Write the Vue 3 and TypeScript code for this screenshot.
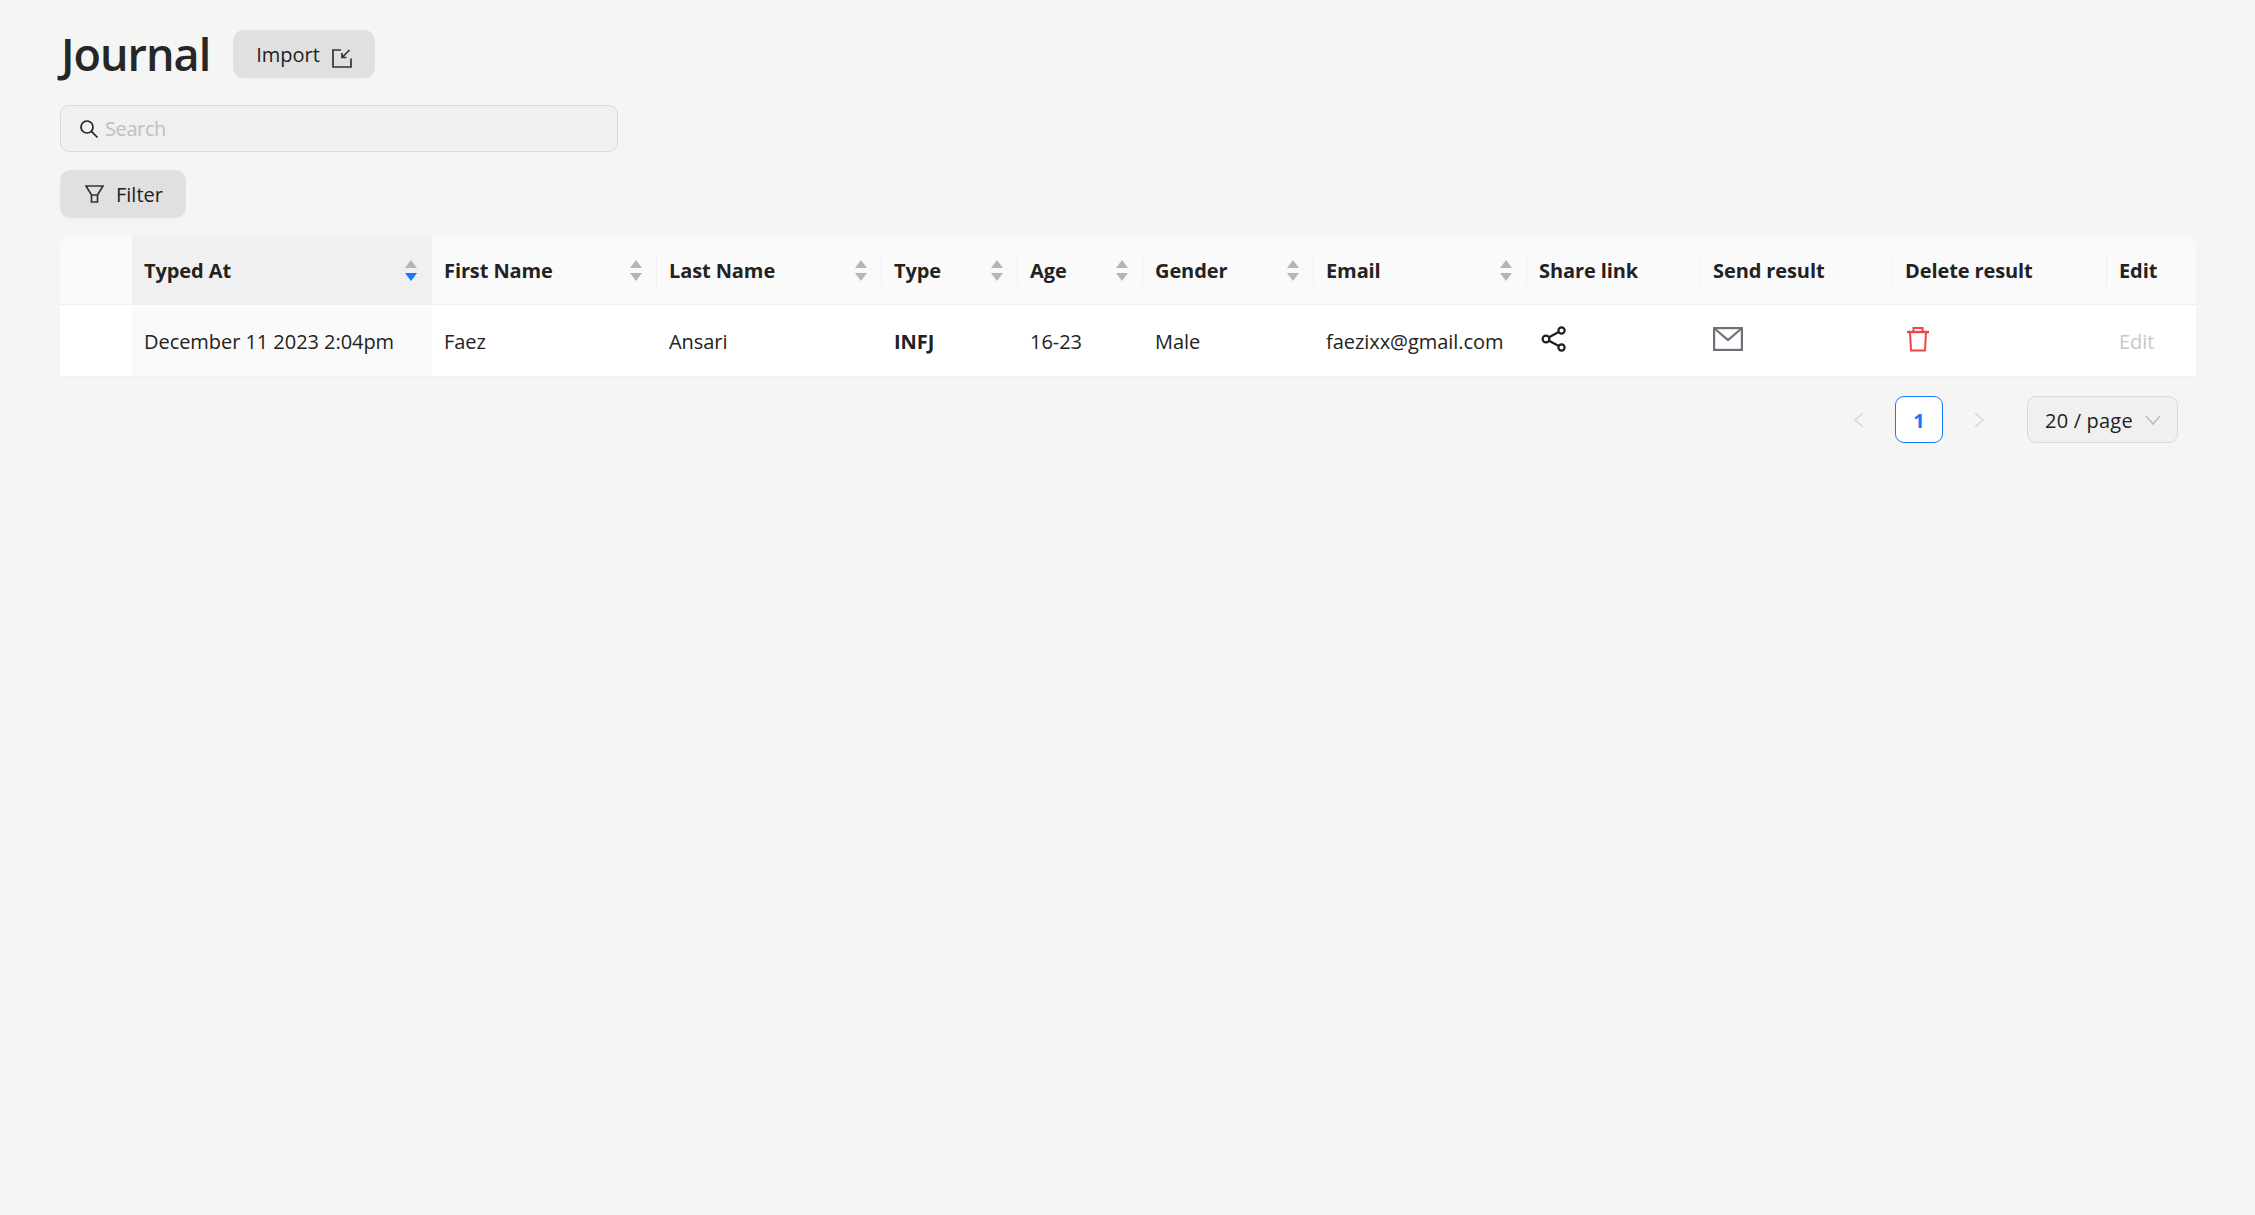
<script setup lang="ts">
interface Col { label: string; width: number; sortable: boolean; active?: boolean }
const cols: Col[] = [
  { label: 'Typed At', width: 300, sortable: true, active: true },
  { label: 'First Name', width: 224, sortable: true },
  { label: 'Last Name', width: 225, sortable: true },
  { label: 'Type', width: 136, sortable: true },
  { label: 'Age', width: 125, sortable: true },
  { label: 'Gender', width: 171, sortable: true },
  { label: 'Email', width: 213, sortable: true },
  { label: 'Share link', width: 174, sortable: false },
  { label: 'Send result', width: 192, sortable: false },
  { label: 'Delete result', width: 214, sortable: false },
  { label: 'Edit', width: 90, sortable: false },
]
</script>

<template>
  <main class="page">
    <header class="title-row">
      <h1 class="title">Journal</h1>
      <button class="btn import-btn" type="button">
        <span>Import</span>
        <svg class="import-icon" viewBox="0 0 20 20" width="20" height="20" fill="none" stroke="#333" stroke-width="1.7">
          <path d="M9 2H1V19H19V10.5" />
          <path d="M17.5 2L10 9.5M10 5V9.5H14.5" />
        </svg>
      </button>
    </header>

    <label class="search">
      <svg viewBox="0 0 20 20" width="20" height="20" fill="none" stroke="#222" stroke-width="1.7">
        <circle cx="8" cy="8" r="6" />
        <path d="M12.4 12.4L18.5 18.5" />
      </svg>
      <input type="text" placeholder="Search" />
    </label>

    <button class="btn filter-btn" type="button">
      <svg viewBox="0 0 19 18" width="19" height="18" fill="none" stroke="#333" stroke-width="1.7">
        <path d="M1 1H18L12.5 10H6.5Z" />
        <path d="M6.5 10V17H12.5V10" />
      </svg>
      <span>Filter</span>
    </button>

    <table class="table">
      <colgroup>
        <col class="col-first" />
        <col v-for="c in cols" :key="c.label" :style="{ width: c.width + 'px' }" />
      </colgroup>
      <thead>
        <tr>
          <th class="corner-l"></th>
          <th v-for="(c, i) in cols" :key="c.label" :class="{ sorted: c.active, 'corner-r': i === cols.length - 1 }">
            <div class="th-inner">
              <span>{{ c.label }}</span>
              <span v-if="c.sortable" class="sorter">
                <i class="up"></i>
                <i class="down" :class="{ on: c.active }"></i>
              </span>
            </div>
          </th>
        </tr>
      </thead>
      <tbody>
        <tr>
          <td></td>
          <td class="sorted-cell">December 11 2023 2:04pm</td>
          <td>Faez</td>
          <td>Ansari</td>
          <td><strong>INFJ</strong></td>
          <td>16-23</td>
          <td>Male</td>
          <td>faezixx@gmail.com</td>
          <td>
            <svg class="raise share" viewBox="0 0 26 26" width="26" height="26" fill="none" stroke="#1f1f1f" stroke-width="2.2">
              <circle cx="5" cy="13" r="3.4" />
              <circle cx="20.5" cy="4.5" r="3.1" />
              <circle cx="20.5" cy="21.5" r="3.1" />
              <path d="M8 11.3L17.8 6M8 14.7L17.8 20" />
            </svg>
          </td>
          <td>
            <svg class="raise" viewBox="0 0 30 24" width="30" height="24" fill="none" stroke="#6f6f78" stroke-width="2.2">
              <rect x="1.1" y="1.1" width="27.8" height="21.8" />
              <path d="M1.5 1.5L15 13L28.5 1.5" />
            </svg>
          </td>
          <td>
            <svg class="raise trash" viewBox="0 0 24 26" width="24" height="26" fill="none" stroke="#ef4444" stroke-width="2">
              <path d="M1 6H23" stroke-width="2.4" />
              <path d="M7.5 6V2H16.5V6" />
              <path d="M4 6L5 24.5H19L20 6" />
            </svg>
          </td>
          <td><span class="muted">Edit</span></td>
        </tr>
      </tbody>
    </table>

    <nav class="pager">
      <svg class="chev" viewBox="0 0 12 16" width="12" height="16" fill="none" stroke="#d9d9d9" stroke-width="1.6"><path d="M10 1L2 8L10 15" /></svg>
      <span class="page-num">1</span>
      <svg class="chev" viewBox="0 0 12 16" width="12" height="16" fill="none" stroke="#d9d9d9" stroke-width="1.6"><path d="M2 1L10 8L2 15" /></svg>
      <div class="size">
        <span class="size-label">20 / page</span>
        <svg viewBox="0 0 16 10" width="16" height="10" fill="none" stroke="#bdbdbd" stroke-width="1.6"><path d="M1 1L8 9L15 1" /></svg>
      </div>
    </nav>
  </main>
</template>

<style>
html, body { margin: 0; background: #f5f5f3; }
</style>

<style scoped>
.page {
  box-sizing: border-box;
  min-height: 1215px;
  padding: 30px 59px 0 60px;
  background: #f5f5f3;
  font-family: "Open Sans", "Noto Sans", sans-serif;
  font-size: 20px;
  color: #222;
}
.title-row { display: flex; align-items: center; gap: 23px; height: 48px; }
.title { margin: 0 0 0 1px; font-size: 45px; font-weight: 600; line-height: 48px; letter-spacing: -1px; color: #262626; }
.btn {
  display: inline-flex; align-items: center; box-sizing: border-box;
  height: 48px; border: none; border-radius: 11px; background: #e0e0e0;
  box-shadow: 0 3px 0 rgba(0, 0, 0, 0.015);
  font: inherit; color: #222; padding: 0;
}
.import-btn { width: 142px; padding-left: 23px; gap: 12px; }
.import-icon { margin-top: 8px; }
.search {
  box-sizing: border-box; display: flex; align-items: center; gap: 6px;
  width: 558px; height: 47px; margin-top: 27px; padding-left: 18px;
  background: #f0f0f0; border: 1px solid #d9d9d9; border-radius: 9px;
}
.search input {
  flex: 1; border: none; outline: none; background: transparent; padding: 0;
  font: inherit; color: #222; letter-spacing: -0.4px;
}
.search input::placeholder { color: #bfbfbf; opacity: 1; }
.filter-btn { display: flex; width: 126px; margin-top: 18px; padding-left: 25px; gap: 12px; }
.table {
  table-layout: fixed; border-collapse: separate; border-spacing: 0;
  width: 2136px; margin-top: 18px;
}
.col-first { width: 72px; }
th, td { box-sizing: border-box; padding: 0 12px; text-align: left; overflow: hidden; white-space: nowrap; }
th:nth-child(n+3), td:nth-child(n+3) { padding-right: 11px; }
th:nth-child(n+4), td:nth-child(n+4) { padding-left: 13px; }
th {
  position: relative; height: 69px; background: #fafafa; font-weight: 700;
  border-bottom: 1px solid #f0f0f0; color: #222; letter-spacing: -0.1px;
}
th + th::before {
  content: ""; position: absolute; left: 0; top: 18px; width: 1px; height: 33px; background: #f0f0f0;
}
th.sorted + th::before, th.sorted::before { display: none; }
th.sorted { background: #f0f0f0; }
.corner-l { border-top-left-radius: 11px; }
.corner-r { border-top-right-radius: 11px; }
td { height: 72px; padding-top: 2px; background: #fff; border-bottom: 1px solid #f0f0f0; letter-spacing: -0.05px; }
td.sorted-cell { background: #fafafa; }
.th-inner { display: flex; align-items: center; justify-content: space-between; }
.sorter { display: flex; flex-direction: column; gap: 5px; margin-right: 3px; }
.sorter i { display: block; width: 0; height: 0; border-left: 6.5px solid transparent; border-right: 6.5px solid transparent; }
.up { border-bottom: 8px solid #b5b5b5; }
.down { border-top: 8px solid #b5b5b5; }
.down.on { border-top-color: #1677ff; }
.raise { display: block; margin-top: -6px; }
.share { margin-left: 2px; }
.trash { margin-left: 1px; }
.muted { color: #c8c8c8; }
.pager { display: flex; align-items: center; justify-content: flex-end; height: 47px; margin-top: 19px; padding-right: 18px; }
.chev { display: block; }
.page-num {
  box-sizing: border-box; display: flex; align-items: center; justify-content: center;
  width: 48px; height: 47px; margin: 0 30px; padding-top: 1px; background: #fff; border: 1.5px solid #1677ff; border-radius: 9px;
  color: #1677ff; font-weight: 700;
}
.size {
  box-sizing: border-box; display: flex; align-items: center; gap: 12px;
  width: 151px; height: 47px; margin-left: 42px; padding-left: 17px; padding-top: 1px;
  background: #f0f0f0; border: 1px solid #d9d9d9; border-radius: 9px;
}
.size-label { letter-spacing: 0.2px; }
</style>
